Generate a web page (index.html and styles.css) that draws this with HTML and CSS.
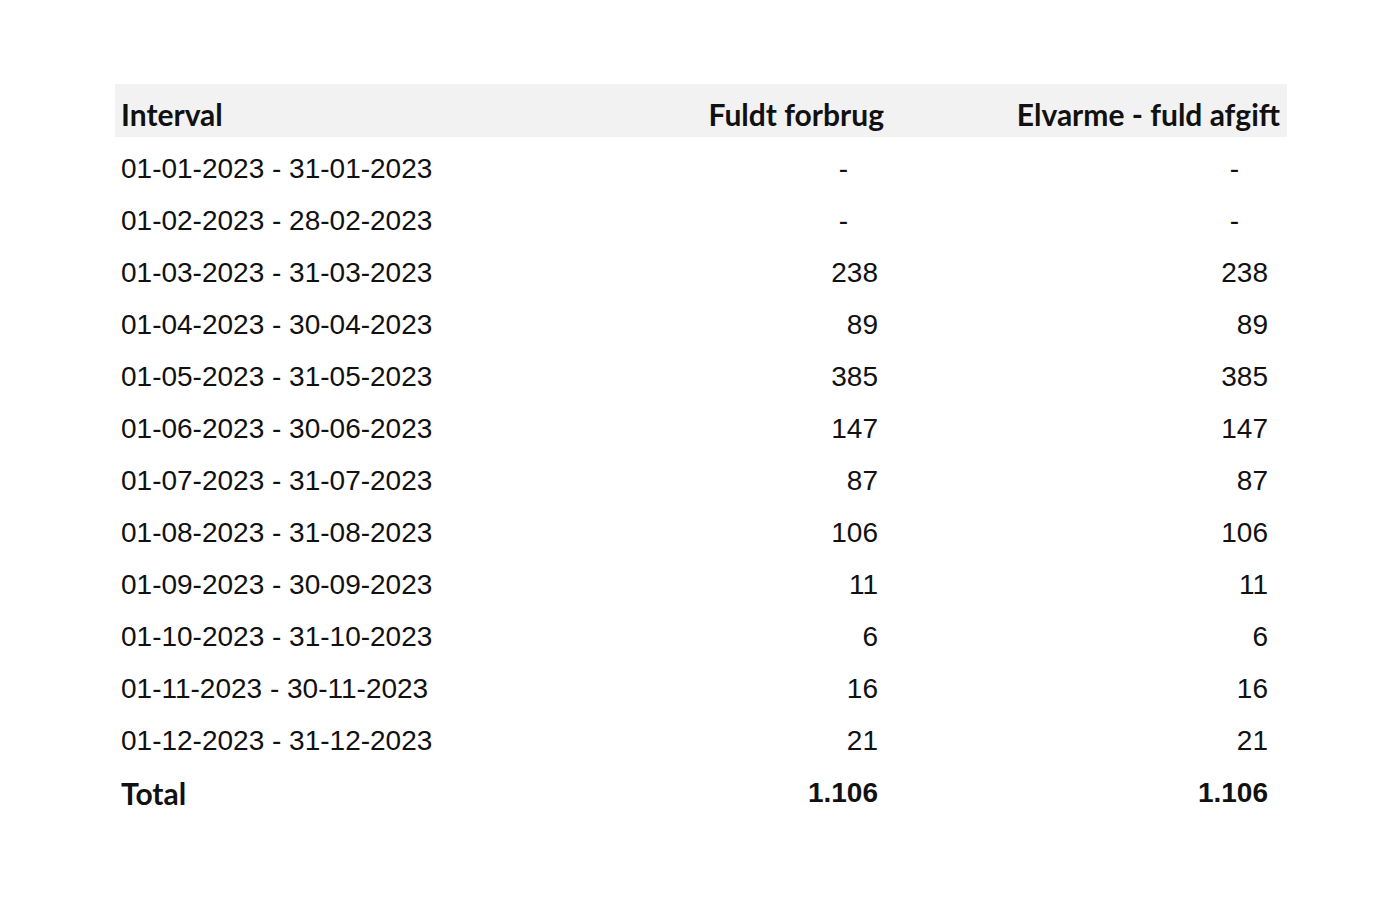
FILE: index.html
```html
<!DOCTYPE html>
<html>
<head>
<meta charset="utf-8">
<link rel="stylesheet" href="styles.css">
</head>
<body>
<div class="sheet">
  <div class="row head">
    <div class="c1">Interval</div>
    <div class="c2">Fuldt forbrug</div>
    <div class="c3">Elvarme - fuld afgift</div>
  </div>
  <div class="row"><div class="c1">01-01-2023 - 31-01-2023</div><div class="c2 zero">-</div><div class="c3 zero">-</div></div>
  <div class="row"><div class="c1">01-02-2023 - 28-02-2023</div><div class="c2 zero">-</div><div class="c3 zero">-</div></div>
  <div class="row"><div class="c1">01-03-2023 - 31-03-2023</div><div class="c2">238</div><div class="c3">238</div></div>
  <div class="row"><div class="c1">01-04-2023 - 30-04-2023</div><div class="c2">89</div><div class="c3">89</div></div>
  <div class="row"><div class="c1">01-05-2023 - 31-05-2023</div><div class="c2">385</div><div class="c3">385</div></div>
  <div class="row"><div class="c1">01-06-2023 - 30-06-2023</div><div class="c2">147</div><div class="c3">147</div></div>
  <div class="row"><div class="c1">01-07-2023 - 31-07-2023</div><div class="c2">87</div><div class="c3">87</div></div>
  <div class="row"><div class="c1">01-08-2023 - 31-08-2023</div><div class="c2">106</div><div class="c3">106</div></div>
  <div class="row"><div class="c1">01-09-2023 - 30-09-2023</div><div class="c2">11</div><div class="c3">11</div></div>
  <div class="row"><div class="c1">01-10-2023 - 31-10-2023</div><div class="c2">6</div><div class="c3">6</div></div>
  <div class="row"><div class="c1">01-11-2023 - 30-11-2023</div><div class="c2">16</div><div class="c3">16</div></div>
  <div class="row"><div class="c1">01-12-2023 - 31-12-2023</div><div class="c2">21</div><div class="c3">21</div></div>
  <div class="row total"><div class="c1">Total</div><div class="c2">1.106</div><div class="c3">1.106</div></div>
</div>
</body>
</html>
```
FILE: styles.css
```css
html, body {
  margin: 0;
  padding: 0;
  background: #ffffff;
}
body {
  padding: 84px 0 0 115px;
  font-family: "Liberation Sans", Arial, sans-serif;
  color: #111111;
}
.sheet {
  width: 1172px;
}
.row {
  display: grid;
  grid-template-columns: 485px 291px 396px;
  height: 52px;
  align-items: end;
  font-size: 28px;
  line-height: 28px;
}
.row > div {
  padding-bottom: 6px;
  white-space: nowrap;
}
.c1 {
  padding-left: 6px;
}
.c2 {
  text-align: right;
  padding-right: 13px;
}
.c3 {
  text-align: right;
  padding-right: 19px;
}
.c2.zero {
  padding-right: 43px;
}
.c3.zero {
  padding-right: 48px;
}
.head {
  height: 53px;
  background: #f2f2f2;
  font-family: Lato, "Liberation Sans", sans-serif;
  font-weight: 700;
  font-size: 30px;
}
.head > div {
  padding-bottom: 9px;
}
.head .c2, .head .c3 {
  padding-right: 7px;
}
.total {
  font-weight: 700;
}
.total .c1 {
  font-family: Lato, "Liberation Sans", sans-serif;
  font-size: 30px;
}
```
